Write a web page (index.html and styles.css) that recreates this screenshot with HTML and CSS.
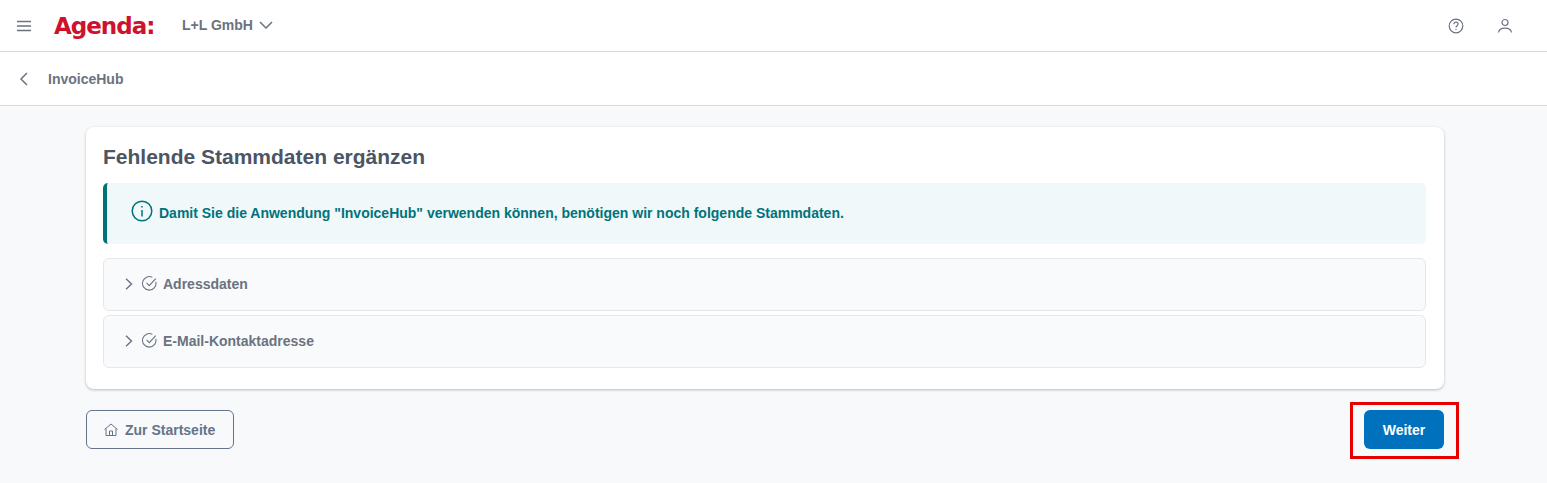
FILE: index.html
```html
<!DOCTYPE html>
<html lang="de">
<head>
    <meta charset="UTF-8">
    <meta name="viewport" content="width=device-width, initial-scale=1.0">
    <title>InvoiceHub</title>
    <link rel="stylesheet" href="styles.css">
</head>
<body>
    <header class="topbar">
        <svg class="menu-icon" width="16" height="12" viewBox="0 0 16 12" fill="none" stroke="#6b7280" stroke-width="1.4"><path d="M1 1.5h14M1 6h14M1 10.5h14"/></svg>
        <span class="logo">Agenda:</span>
        <span class="company">L+L GmbH</span>
        <svg class="company-arrow" width="14" height="8" viewBox="0 0 14 8" fill="none" stroke="#6b7280" stroke-width="1.5"><path d="M1 1l6 6 6-6"/></svg>
        <div class="topbar-right">
            <svg width="16" height="16" viewBox="0 0 16 16" fill="none" stroke="#6b7280" stroke-width="1.2"><circle cx="8" cy="8" r="6.8"/><path d="M5.9 6.2c0-1.2 1-2 2.1-2s2.1.8 2.1 1.9c0 1.600-2.100 1.600-2.100 3.300"/><path d="M8 11v1"/></svg>
            <svg width="16" height="16" viewBox="0 0 16 16" fill="none" stroke="#6b7280" stroke-width="1.2"><circle cx="8" cy="4.500" r="3"/><path d="M1.500 14.500c.5-3 3-4.300 6.500-4.300s6 1.300 6.500 4.300"/></svg>
        </div>
    </header>

    <div class="subbar">
        <svg width="9" height="14" viewBox="0 0 9 14" fill="none" stroke="#6b7280" stroke-width="1.5"><path d="M8 1L2 7l6 6"/></svg>
        <span class="subbar-title">InvoiceHub</span>
    </div>

    <main class="content">
        <section class="card">
            <h1>Fehlende Stammdaten ergänzen</h1>

            <div class="notice">
                <svg width="22" height="22" viewBox="0 0 22 22" fill="none" stroke="#00737a" stroke-width="1.5"><circle cx="11" cy="11" r="9.800"/><path d="M11 10v6.500M11 6v1.500"/></svg>
                <span>Damit Sie die Anwendung "InvoiceHub" verwenden können, benötigen wir noch folgende Stammdaten.</span>
            </div>

            <div class="accordion">
                <svg width="8" height="12" viewBox="0 0 8 12" fill="none" stroke="#6b7280" stroke-width="1.400"><path d="M1 .8L6.500 6 1 11.200"/></svg>
                <svg width="15" height="15" viewBox="0 0 14 14" fill="none" stroke="#6b7280" stroke-width="1"><path d="M12.900 5.500A6.300 6.300 0 1 1 9.700 1.300"/><path d="M4.300 6.500l2.500 2.500 6-6.500"/></svg>
                <span>Adressdaten</span>
            </div>
            <div class="accordion">
                <svg width="8" height="12" viewBox="0 0 8 12" fill="none" stroke="#6b7280" stroke-width="1.400"><path d="M1 .8L6.500 6 1 11.200"/></svg>
                <svg width="15" height="15" viewBox="0 0 14 14" fill="none" stroke="#6b7280" stroke-width="1"><path d="M12.900 5.500A6.300 6.300 0 1 1 9.700 1.300"/><path d="M4.300 6.500l2.500 2.500 6-6.500"/></svg>
                <span>E-Mail-Kontaktadresse</span>
            </div>
        </section>

        <div class="actions">
            <button class="btn-outline">
                <svg width="14" height="13" viewBox="0 0 14 13" fill="none" stroke="#64748b" stroke-width="1"><path d="M.5 6.500L7 1l6.500 5.500M2 5.500v7h10v-7M5.500 12.500V8h3v4.500"/></svg>
                Zur Startseite
            </button>
            <button class="btn-primary">Weiter<span class="highlight"></span></button>
        </div>
    </main>
</body>
</html>
```
FILE: styles.css
```css
* {
    box-sizing: border-box;
}

body {
    margin: 0;
    height: 483px;
    overflow: hidden;
    background: #f8f9fa;
    font-family: 'Liberation Sans', sans-serif;
    color: #6b7280;
}

.topbar {
    display: flex;
    align-items: center;
    height: 52px;
    padding: 0 34px 0 16px;
    background: #fff;
    border-bottom: 1px solid #d5d7dc;
}

.menu-icon {
    margin-right: 22px;
}

.logo {
    font-family: 'DejaVu Sans', sans-serif;
    font-weight: 700;
    font-size: 23px;
    letter-spacing: -1px;
    color: #d0112b;
    width: 128px;
}

.company {
    font-size: 14px;
    font-weight: 700;
    margin: 0 6px 2px 0;
}

.company-arrow {
    margin-bottom: 2px;
}

.topbar-right {
    margin-left: auto;
    display: flex;
    gap: 33px;
}

.subbar {
    display: flex;
    align-items: center;
    gap: 20px;
    height: 54px;
    padding: 0 0 0 19px;
    background: #fff;
    border-bottom: 1px solid #d5d7dc;
}

.subbar-title {
    font-size: 14px;
    font-weight: 700;
}

.content {
    width: 1358px;
    margin-left: 86px;
    padding-top: 21px;
}

.card {
    height: 262px;
    padding: 17px 18px 0 17px;
    background: #fff;
    border-radius: 8px;
    box-shadow: 0 1px 3px rgba(0, 0, 0, 0.25);
}

h1 {
    margin: 0 0 13px;
    font-size: 21px;
    line-height: 26px;
    font-weight: 700;
    color: #4b5563;
}

.notice {
    display: flex;
    align-items: center;
    gap: 6px;
    height: 61px;
    padding-left: 24px;
    margin-bottom: 14px;
    background: #f0f8fa;
    border-left: 4px solid #00737a;
    border-radius: 5px;
    font-size: 14px;
    font-weight: 700;
    color: #00737a;
}

.notice svg {
    margin-bottom: 5px;
}

.notice span {
    margin-bottom: 2px;
}

.accordion {
    display: flex;
    align-items: center;
    height: 53px;
    padding: 0 0 2px 21px;
    margin-bottom: 4px;
    background: #f9fafb;
    border: 1px solid #e5e7eb;
    border-radius: 6px;
    font-size: 14px;
    font-weight: 700;
}

.accordion svg:nth-child(2) {
    margin: 0 6px 0 9px;
}

.actions {
    display: flex;
    justify-content: space-between;
    margin-top: 21px;
}

.btn-outline {
    display: flex;
    align-items: center;
    gap: 7px;
    width: 148px;
    height: 39px;
    padding: 0 0 0 17px;
    background: transparent;
    border: 1px solid #64748b;
    border-radius: 6px;
    font: 700 14px 'Liberation Sans', sans-serif;
    color: #64748b;
}

.btn-primary {
    position: relative;
    width: 80px;
    height: 39px;
    background: #0071bc;
    border: none;
    border-radius: 6px;
    font: 700 14px 'Liberation Sans', sans-serif;
    color: #fff;
}

.highlight {
    position: absolute;
    left: -14px;
    top: -8px;
    width: 109px;
    height: 57px;
    border: 3px solid #e60000;
}
```
